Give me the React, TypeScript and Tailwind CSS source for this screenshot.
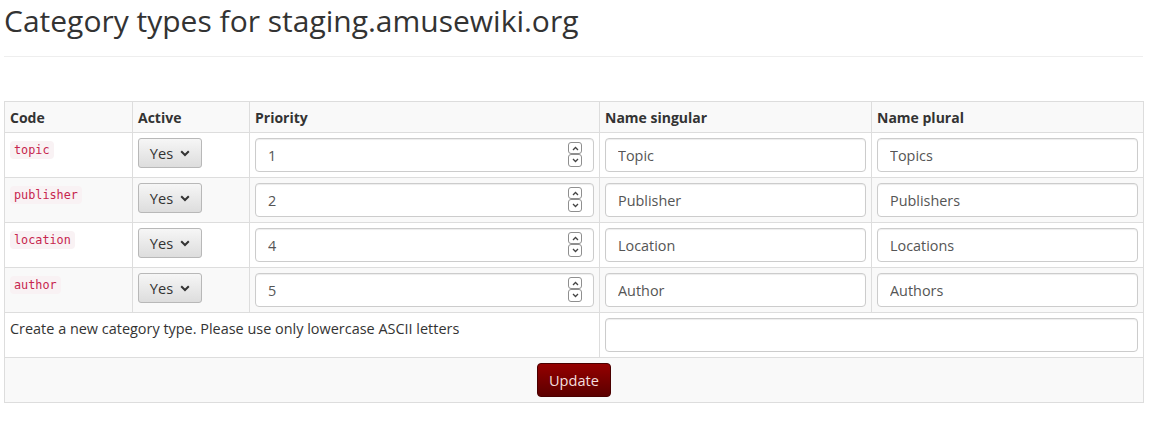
import React from "react";

const rows = [
  { code: "topic", priority: "1", singular: "Topic", plural: "Topics" },
  { code: "publisher", priority: "2", singular: "Publisher", plural: "Publishers" },
  { code: "location", priority: "4", singular: "Location", plural: "Locations" },
  { code: "author", priority: "5", singular: "Author", plural: "Authors" },
];

const cell = "border border-[#dddddd] p-[5px] align-top text-left";
const textCell = "border border-[#dddddd] px-[5px] pt-[6px] pb-[4px] align-top text-left";
const input =
  "block h-[34px] w-full rounded-[4px] border border-[#cccccc] bg-white px-3 text-[14.4px] text-[#555555] shadow-[inset_0_1px_1px_rgba(0,0,0,0.075)] outline-none";

function Chevron({ up }: { up?: boolean }) {
  return (
    <svg width="7" height="5" viewBox="0 0 7 5" className="block">
      <path
        d={up ? "M1 4 L3.5 1.5 L6 4" : "M1 1 L3.5 3.5 L6 1"}
        fill="none"
        stroke="#444"
        strokeWidth="1.3"
      />
    </svg>
  );
}

function Spinner() {
  return (
    <div className="absolute right-[12px] top-[4px] flex flex-col">
      <div className="flex h-[12px] w-[14px] items-center justify-center rounded-[3px] border border-[#8f8f8f] bg-white">
        <Chevron up />
      </div>
      <div className="flex h-[13px] w-[14px] items-center justify-center rounded-[3px] border border-[#8f8f8f] bg-white">
        <Chevron />
      </div>
    </div>
  );
}

function ActiveSelect() {
  return (
    <div className="flex h-[30px] w-[64px] items-center justify-center gap-[7px] rounded-[3px] border border-[#b8b8b8] bg-gradient-to-b from-[#f6f6f6] to-[#dddddd] text-[14.6px] text-[#333333]">
      <span>Yes</span>
      <svg width="10" height="7" viewBox="0 0 10 7">
        <path d="M1.2 1.3 L5 5 L8.8 1.3" fill="none" stroke="#333" strokeWidth="2" />
      </svg>
    </div>
  );
}

export default function App() {
  return (
    <div className="min-h-[442px] bg-white pl-[4px] font-['Open_Sans',sans-serif] text-[14.45px] leading-[20px] text-[#333333]">
      <div className="w-[1139px]">
        <div className="mt-[4px] border-b border-[#eeeeee] pb-[19px]">
          <h1 className="text-[30px] leading-[33px] font-normal">Category types for staging.amusewiki.org</h1>
        </div>

        <table className="mt-[44px] w-full table-fixed border-collapse">
          <colgroup>
            <col className="w-[128px]" />
            <col className="w-[117px]" />
            <col className="w-[350px]" />
            <col className="w-[272px]" />
            <col className="w-[272px]" />
          </colgroup>
          <tbody>
            <tr className="bg-[#f9f9f9] text-[14px] font-bold">
              <td className={textCell}>Code</td>
              <td className={textCell}>Active</td>
              <td className={textCell}>Priority</td>
              <td className={textCell}>Name singular</td>
              <td className={textCell}>Name plural</td>
            </tr>
            {rows.map((r, i) => (
              <tr key={r.code} className={i % 2 === 1 ? "bg-[#f9f9f9]" : "bg-white"}>
                <td className={textCell}>
                  <code className="rounded-[4px] bg-[#f9f2f4] px-[4px] py-[2px] font-['DejaVu_Sans_Mono',monospace] text-[11.8px] text-[#c7254e]">
                    {r.code}
                  </code>
                </td>
                <td className={cell}>
                  <ActiveSelect />
                </td>
                <td className={cell}>
                  <div className="relative">
                    <input className={input} defaultValue={r.priority} />
                    <Spinner />
                  </div>
                </td>
                <td className={cell}>
                  <input className={input} defaultValue={r.singular} />
                </td>
                <td className={cell}>
                  <input className={input} defaultValue={r.plural} />
                </td>
              </tr>
            ))}
            <tr className="bg-white">
              <td className={textCell} colSpan={3}>
                Create a new category type. Please use only lowercase ASCII letters
              </td>
              <td className={cell} colSpan={2}>
                <input className={input} defaultValue="" />
              </td>
            </tr>
            <tr className="bg-[#f9f9f9]">
              <td className={cell + " text-center"} colSpan={5}>
                <button className="mx-auto block h-[34px] w-[74px] rounded-[4px] border border-[#4a0000] bg-gradient-to-b from-[#950000] to-[#5c0000] text-[14.6px] text-[#f3dede]">
                  Update
                </button>
              </td>
            </tr>
          </tbody>
        </table>
      </div>
    </div>
  );
}
